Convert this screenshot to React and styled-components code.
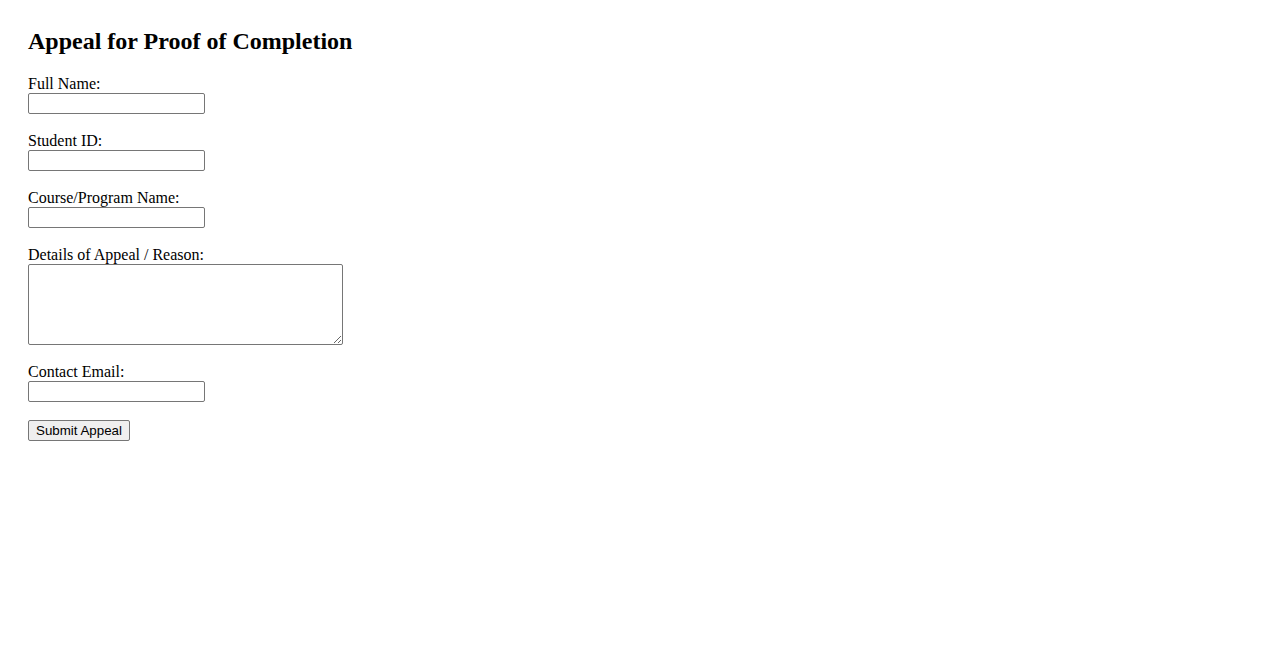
import React from 'react';
import styled, { createGlobalStyle } from 'styled-components';

const GlobalStyle = createGlobalStyle`
  body {
    margin: 0;
    background: #fff;
    color: #000;
    font-family: "Liberation Serif", "Times New Roman", serif;
    font-size: 16px;
  }
`;

const Page = styled.div`
  padding: 28px;
`;

const Title = styled.h2`
  margin: 0 0 20px;
  font-size: 24px;
  font-weight: bold;
`;

const Form = styled.form`
  display: flex;
  flex-direction: column;
  align-items: flex-start;
`;

const Field = styled.div`
  display: flex;
  flex-direction: column;
  align-items: flex-start;
  margin-bottom: 18px;
`;

const Label = styled.label`
  line-height: normal;
`;

const TextInput = styled.input`
  box-sizing: border-box;
  width: 177px;
  height: 21px;
  margin: 0;
  padding: 1px 2px;
  border: 1px solid #767676;
  border-radius: 2px;
  font-family: "Liberation Sans", Arial, sans-serif;
  font-size: 13.33px;
`;

const TextArea = styled.textarea`
  box-sizing: border-box;
  width: 315px;
  height: 81px;
  margin: 0;
  padding: 2px;
  border: 1px solid #767676;
  border-radius: 2px;
  font-family: "Liberation Mono", monospace;
  font-size: 13.33px;
`;

const SubmitButton = styled.button`
  box-sizing: border-box;
  height: 21px;
  margin: 0;
  padding: 1px 7px;
  border: 1px solid #767676;
  border-radius: 2px;
  background: #efefef;
  color: #000;
  font-family: "Liberation Sans", Arial, sans-serif;
  font-size: 13.33px;
`;

const fields = [
  { id: 'name', label: 'Full Name:', type: 'text' },
  { id: 'studentId', label: 'Student ID:', type: 'text' },
  { id: 'course', label: 'Course/Program Name:', type: 'text' },
  { id: 'details', label: 'Details of Appeal / Reason:', multiline: true },
  { id: 'email', label: 'Contact Email:', type: 'email' },
];

const App = () => {
  return (
    <>
      <GlobalStyle />
      <Page>
        <Title>Appeal for Proof of Completion</Title>
        <Form onSubmit={(e) => e.preventDefault()}>
          {fields.map((f) => (
            <Field key={f.id}>
              <Label htmlFor={f.id}>{f.label}</Label>
              {f.multiline ? <TextArea id={f.id} /> : <TextInput id={f.id} type={f.type} />}
            </Field>
          ))}
          <SubmitButton type="submit">Submit Appeal</SubmitButton>
        </Form>
      </Page>
    </>
  );
};

export default App;
